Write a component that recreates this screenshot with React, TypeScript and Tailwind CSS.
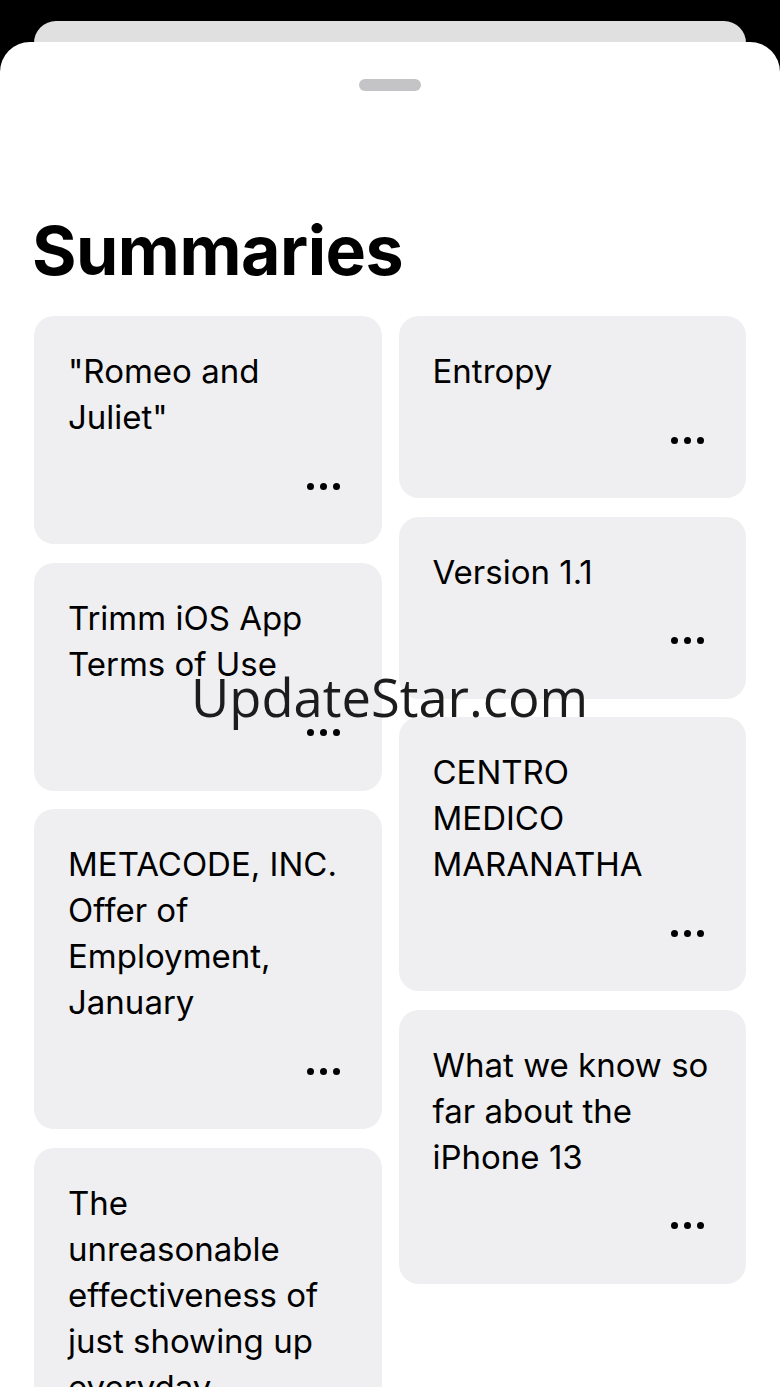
import React from "react";

type Summary = {
  id: string;
  title: string;
};

const LEFT: Summary[] = [
  { id: "romeo", title: "\"Romeo and Juliet\"" },
  { id: "trimm", title: "Trimm iOS App Terms of Use" },
  { id: "metacode", title: "METACODE, INC. Offer of Employment, January" },
  { id: "showing-up", title: "The unreasonable effectiveness of just showing up everyday" },
];

const RIGHT: Summary[] = [
  { id: "entropy", title: "Entropy" },
  { id: "version", title: "Version 1.1" },
  { id: "centro", title: "CENTRO MEDICO MARANATHA" },
  { id: "iphone", title: "What we know so far about the iPhone 13" },
];

function MoreDots() {
  return (
    <div className="flex items-center gap-[6px]">
      <span className="h-[7px] w-[7px] rounded-full bg-black" />
      <span className="h-[7px] w-[7px] rounded-full bg-black" />
      <span className="h-[7px] w-[7px] rounded-full bg-black" />
    </div>
  );
}

function SummaryCard({ item }: { item: Summary }) {
  return (
    <div className="rounded-[20px] bg-[#efeff1] pl-[34px] pr-[37px] pt-[32px] pb-[36px]">
      <p className="text-[33px] leading-[46px] text-black">{item.title}</p>
      <div className="mt-[24px] flex h-[44px] items-center justify-end pr-[5px]">
        <MoreDots />
      </div>
    </div>
  );
}

export default function App() {
  return (
    <div
      className="relative h-[1387px] w-[780px] overflow-hidden bg-black"
      style={{ fontFamily: "Inter, 'Noto Sans', sans-serif" }}
    >
      {/* stacked sheet behind */}
      <div className="mx-[34px] mt-[21px] h-[60px] rounded-t-[22px] bg-[#e0e0e0]" />

      {/* front sheet */}
      <div className="absolute inset-x-0 top-[42px] bottom-0 rounded-t-[30px] bg-white">
        <div className="flex justify-center pt-[37px]">
          <div className="h-[12px] w-[62px] rounded-full bg-[#c4c4c6]" />
        </div>

        <h1 className="mt-[124px] px-[32px] text-[68px] font-bold leading-[70px] tracking-[-0.5px] text-black">
          Summaries
        </h1>

        <div className="mt-[31px] grid grid-cols-2 gap-x-[17px] px-[34px]">
          <div className="flex flex-col gap-[18.5px]">
            {LEFT.map((s) => (
              <SummaryCard key={s.id} item={s} />
            ))}
          </div>
          <div className="flex flex-col gap-[18.5px]">
            {RIGHT.map((s) => (
              <SummaryCard key={s.id} item={s} />
            ))}
          </div>
        </div>
      </div>

      {/* watermark */}
      <div
        className="pointer-events-none absolute left-[191px] top-[667px] text-[52.5px] leading-[60px] text-[#1c1c1c]"
        style={{ fontFamily: "'Open Sans', 'Noto Sans', sans-serif" }}
      >
        UpdateStar.com
      </div>
    </div>
  );
}
